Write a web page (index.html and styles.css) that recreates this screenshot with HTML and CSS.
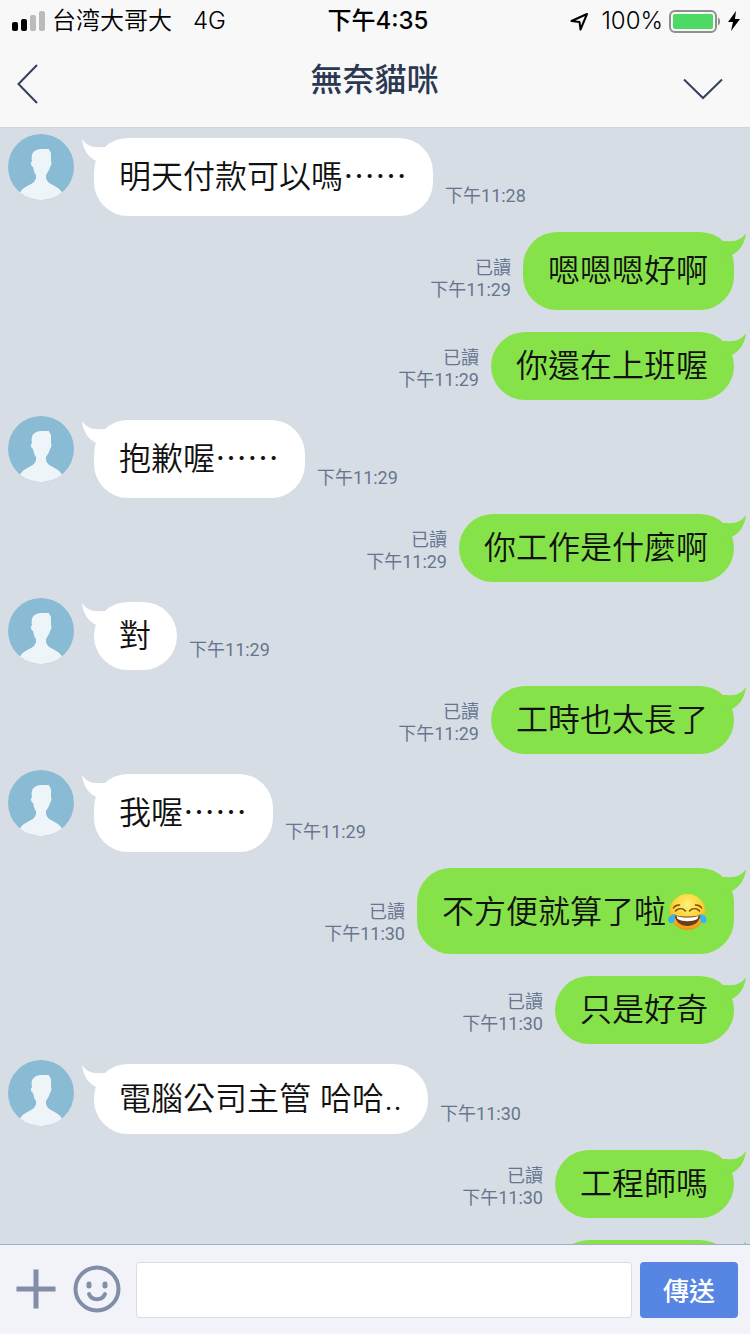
FILE: index.html
```html
<!DOCTYPE html>
<html lang="zh-Hant">
<head>
<meta charset="utf-8">
<meta name="viewport" content="width=device-width, initial-scale=1">
<title>無奈貓咪</title>
<link rel="stylesheet" href="styles.css">
</head>
<body>
<svg class="defs" width="0" height="0" aria-hidden="true">
  <symbol id="avatar" viewBox="0 0 66 66">
    <circle cx="33" cy="33" r="33" fill="#8abbd4"/>
    <path fill="#edf5f9" d="M12 58.500C16 51 27 51 28 44L28 41C26 39 26 36 25 33C23 32 22 29 24 27C22 18 28 15 34 15L41 15C41 17 43 17 43 20L43 27C44 29 43 32 42 33C41 37 39 39 38 41L38 44C39 51 50 51 54 58.500A33 33 0 0 1 12 58.500Z"/>
  </symbol>
  <symbol id="tail" viewBox="0 0 24 24">
    <path d="M0 0C4 6 10 9 19 8L23 8L24 24L14 22C6 18 1 10 0 0Z"/>
  </symbol>
</svg>

<header class="top">
  <div class="status">
    <div class="status-left">
      <svg width="33" height="20" viewBox="0 0 33 20" aria-hidden="true">
        <rect x="0" y="11" width="6" height="9" rx="2"/>
        <rect x="9" y="8" width="6" height="12" rx="2"/>
        <rect x="18" y="4" width="6" height="16" rx="2" fill="#bbb"/>
        <rect x="27" y="0" width="6" height="20" rx="2" fill="#bbb"/>
      </svg>
      <span class="carrier">台湾大哥大</span>
      <span>4G</span>
    </div>
    <div class="clock">下午4:35</div>
    <div class="status-right">
      <svg width="19" height="19" viewBox="0 0 19 19" aria-hidden="true"><path d="M1.500 9L17 2L10.500 17.500L9.500 10Z" fill="none" stroke="#000" stroke-width="2" stroke-linejoin="round"/></svg>
      <span class="percent">100%</span>
      <svg width="51" height="23" viewBox="0 0 51 23" aria-hidden="true">
        <rect x="1" y="1" width="46" height="21" rx="5" fill="none" stroke="#8f8f8f" stroke-width="2"/>
        <rect x="4" y="4" width="40" height="15" rx="2" fill="#4cd964"/>
        <path d="M49 7.500C52 9 52 14 49 15.500Z" fill="#8f8f8f"/>
      </svg>
      <svg class="bolt" width="12" height="20" viewBox="0 0 12 20" aria-hidden="true"><path d="M8 0L0 11L5 11L3 20L12 8L7 8Z"/></svg>
    </div>
  </div>
  <div class="titlebar">
    <button class="icon-btn" type="button" aria-label="返回">
      <svg width="22" height="42" viewBox="0 0 22 42"><path d="M20 2L1.500 21L20 40" fill="none" stroke="#36415f" stroke-width="2"/></svg>
    </button>
    <h1 class="title">無奈貓咪</h1>
    <button class="icon-btn menu" type="button" aria-label="選單">
      <svg width="42" height="22" viewBox="0 0 42 22"><path d="M2 1.500L21 20L40 1.500" fill="none" stroke="#36415f" stroke-width="2"/></svg>
    </button>
  </div>
</header>

<main class="chat">
  <div class="row received">
    <svg class="avatar"><use href="#avatar"/></svg>
    <div class="bubble tall">明天付款可以嗎⋯⋯<svg class="tail"><use href="#tail"/></svg></div>
    <div class="meta">下午11:28</div>
  </div>
  <div class="row sent">
    <div class="bubble tall">嗯嗯嗯好啊<svg class="tail"><use href="#tail"/></svg></div>
    <div class="meta">已讀<br>下午11:29</div>
  </div>
  <div class="row sent">
    <div class="bubble">你還在上班喔<svg class="tail"><use href="#tail"/></svg></div>
    <div class="meta">已讀<br>下午11:29</div>
  </div>
  <div class="row received">
    <svg class="avatar"><use href="#avatar"/></svg>
    <div class="bubble tall">抱歉喔⋯⋯<svg class="tail"><use href="#tail"/></svg></div>
    <div class="meta">下午11:29</div>
  </div>
  <div class="row sent">
    <div class="bubble">你工作是什麼啊<svg class="tail"><use href="#tail"/></svg></div>
    <div class="meta">已讀<br>下午11:29</div>
  </div>
  <div class="row received">
    <svg class="avatar"><use href="#avatar"/></svg>
    <div class="bubble">對<svg class="tail"><use href="#tail"/></svg></div>
    <div class="meta">下午11:29</div>
  </div>
  <div class="row sent">
    <div class="bubble">工時也太長了<svg class="tail"><use href="#tail"/></svg></div>
    <div class="meta">已讀<br>下午11:29</div>
  </div>
  <div class="row received">
    <svg class="avatar"><use href="#avatar"/></svg>
    <div class="bubble tall">我喔⋯⋯<svg class="tail"><use href="#tail"/></svg></div>
    <div class="meta">下午11:29</div>
  </div>
  <div class="row sent">
    <div class="bubble with-emoji"><span>不方便就算了啦</span><svg class="emoji" viewBox="0 0 40 38" role="img" aria-label="笑哭">
        <defs><radialGradient id="face" cx=".5" cy=".3" r=".7"><stop offset="0" stop-color="#fff27a"/><stop offset=".6" stop-color="#fdd02f"/><stop offset="1" stop-color="#ee8f17"/></radialGradient></defs>
        <circle cx="20" cy="19" r="18" fill="url(#face)"/>
        <path d="M7 22C15 24 25 24 33 22C32 29 27 33 20 33C13 33 8 29 7 22Z" fill="#713b16"/>
        <path d="M9 23C16 25 24 25 31 23L30 26C24 29 16 29 10 26Z" fill="#fff"/>
        <path d="M8 18C11 15 15 15 18 18M22 18C25 15 29 15 32 18M6 15C7 13 9 12 12 12M28 12C31 12 33 13 34 15" fill="none" stroke="#7a4611" stroke-width="1.500" stroke-linecap="round"/>
        <path d="M8 21C4 21 0 24 1 28C2 31 6 31 7 28ZM32 21C36 21 40 24 39 28C38 31 34 31 33 28Z" fill="#35b4f2"/>
      </svg><svg class="tail"><use href="#tail"/></svg></div>
    <div class="meta">已讀<br>下午11:30</div>
  </div>
  <div class="row sent">
    <div class="bubble">只是好奇<svg class="tail"><use href="#tail"/></svg></div>
    <div class="meta">已讀<br>下午11:30</div>
  </div>
  <div class="row received">
    <svg class="avatar"><use href="#avatar"/></svg>
    <div class="bubble latin">電腦公司主管 哈哈..<svg class="tail"><use href="#tail"/></svg></div>
    <div class="meta">下午11:30</div>
  </div>
  <div class="row sent">
    <div class="bubble">工程師嗎<svg class="tail"><use href="#tail"/></svg></div>
    <div class="meta">已讀<br>下午11:30</div>
  </div>
  <div class="row sent">
    <div class="bubble pending"><svg class="tail"><use href="#tail"/></svg></div>
  </div>
</main>

<form class="composer">
  <button class="icon-btn plus" type="button" aria-label="新增">
    <svg width="40" height="40" viewBox="0 0 40 40"><path d="M3 20H37M20 3V37" fill="none" stroke="#828ea8" stroke-width="5" stroke-linecap="square"/></svg>
  </button>
  <button class="icon-btn smile" type="button" aria-label="貼圖">
    <svg width="48" height="48" viewBox="0 0 48 48" fill="none" stroke="#828ea8" stroke-linecap="round"><circle cx="24" cy="24" r="21.500" stroke-width="4"/><path d="M16 19V21M32 19V21" stroke-width="5"/><path d="M16 29C19 36 29 36 32 29" stroke-width="4"/></svg>
  </button>
  <input class="field" type="text" aria-label="訊息">
  <button class="send" type="submit">傳送</button>
</form>
</body>
</html>
```

FILE: styles.css
```css
* {
  box-sizing: border-box;
}

body {
  margin: 0;
  height: 100vh;
  display: flex;
  flex-direction: column;
  overflow: hidden;
  background: #d7dde5;
  color: #111;
  font-family: Inter, "Noto Sans CJK TC", sans-serif;
}

svg {
  display: block;
  flex: none;
}

.defs {
  position: absolute;
}

.top {
  flex: none;
  background: #f8f8f8;
  border-bottom: 1px solid #d2d6dc;
}

.status {
  display: grid;
  grid-template-columns: 1fr auto 1fr;
  align-items: center;
  height: 40px;
  padding: 0 10px 0 12px;
  color: #000;
  font-size: 24px;
  font-weight: 350;
  line-height: 42px;
}

.status-left,
.status-right {
  display: flex;
  align-items: center;
}

.carrier {
  margin: 0 21px 0 7px;
}

.clock {
  padding-left: 4px;
  font-weight: 500;
}

.status-right {
  justify-content: flex-end;
}

.percent {
  margin: 0 6px 0 12px;
}

.bolt {
  margin-left: 8px;
}

.titlebar {
  display: flex;
  align-items: center;
  justify-content: space-between;
  height: 87px;
  padding: 0 26px 0 17px;
}

.title {
  flex: 1;
  margin: 0 0 8px 28px;
  color: #2b3852;
  font-size: 32px;
  font-weight: 500;
  line-height: 48px;
  text-align: center;
}

.icon-btn {
  flex: none;
  padding: 0;
  border: 0;
  background: none;
}

.menu {
  padding-top: 10px;
}

.chat {
  flex: 1;
  min-height: 0;
  overflow: hidden;
  padding: 10px 16px 0 8px;
}

.row {
  display: flex;
  align-items: flex-end;
  gap: 12px;
}

.sent {
  flex-direction: row-reverse;
}

.received + .sent {
  margin-top: 16px;
}

.sent + .sent {
  margin-top: 22px;
}

.sent + .received {
  margin-top: 20px;
}

.avatar {
  align-self: flex-start;
  width: 66px;
  height: 66px;
  margin: -4px 8px 0 0;
}

.bubble {
  position: relative;
  padding: 11px 26px 11px 25px;
  border-radius: 34px;
  font-size: 32px;
  font-weight: 350;
  line-height: 46px;
}

.tall {
  padding-top: 16px;
  padding-bottom: 16px;
}

.latin {
  padding-top: 12px;
  padding-bottom: 12px;
}

.with-emoji {
  display: flex;
  align-items: center;
  gap: 1px;
  padding-top: 21px;
  padding-bottom: 19px;
}

.emoji {
  width: 41px;
  height: 38px;
}

.pending {
  width: 179px;
  height: 68px;
}

.received .bubble {
  background: #fff;
}

.sent .bubble {
  background: #86e249;
}

.tail {
  position: absolute;
  top: 1px;
  width: 24px;
  height: 24px;
  fill: #fff;
}

.received .tail {
  left: -12px;
}

.sent .tail {
  right: -12px;
  fill: #86e249;
  transform: scaleX(-1);
}

.meta {
  padding-bottom: 9px;
  color: #68758f;
  font-family: Roboto, "Noto Sans CJK TC", sans-serif;
  font-size: 18px;
  font-weight: 400;
  line-height: 22px;
  text-align: right;
}

.composer {
  flex: none;
  display: flex;
  align-items: center;
  padding: 17px 12px 16px 16px;
  background: #f2f3f8;
  border-top: 1px solid #a3adbd;
}

.plus,
.smile {
  padding-bottom: 2px;
}

.plus {
  margin-right: 17px;
}

.smile {
  margin-right: 15px;
}

.field {
  flex: 1;
  min-width: 0;
  height: 56px;
  padding: 0 12px;
  border: 1px solid #d9dce4;
  border-radius: 4px;
  background: #fff;
  font: inherit;
  font-size: 28px;
}

.send {
  width: 98px;
  height: 56px;
  margin-left: 8px;
  padding: 0 0 2px;
  border: 0;
  border-radius: 4px;
  background: #5785e3;
  color: #fff;
  font-family: inherit;
  font-size: 26px;
  font-weight: 500;
}
```
